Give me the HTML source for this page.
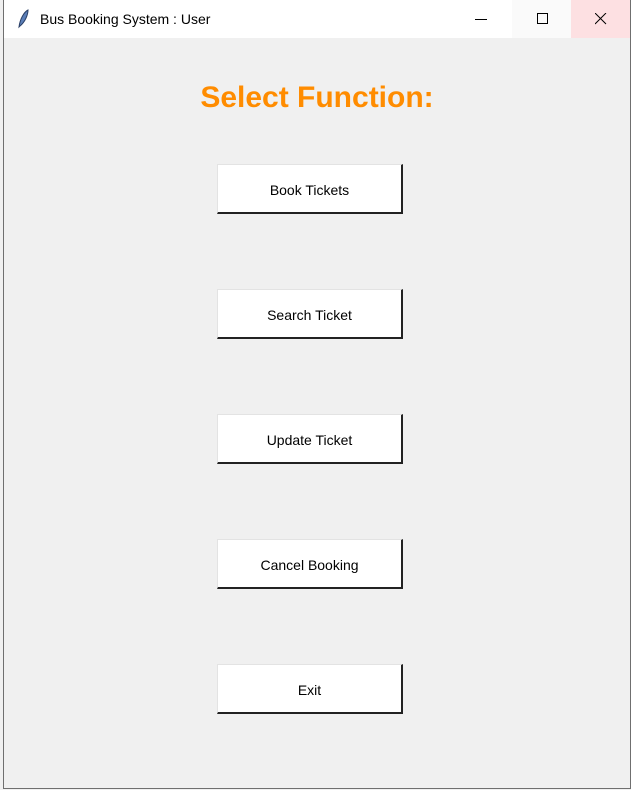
<html><head><style>
body{margin:0;width:631px;height:790px;background:#f0f0f0;font-family:"Liberation Sans",sans-serif;position:relative;overflow:hidden}
.win{position:absolute;left:3px;top:0;width:626px;height:788px;border:1px solid #6f6f6f;border-top:none;background:#f0f0f0}
.tb{position:absolute;left:0;top:0;width:626px;height:38px;background:#fff}
.t{position:absolute;left:36px;top:11px;font-size:14px;color:#000}
.mx{position:absolute;left:508px;top:0;width:59px;height:38px;background:#fafafa}
.cl{position:absolute;left:567px;top:0;width:59px;height:38px;background:#fde0e2}
h1{position:absolute;left:0;width:626px;top:81px;margin:0;text-align:center;font-size:30px;font-weight:bold;color:#ff8c00}
.b{position:absolute;left:213px;width:183px;height:47px;background:#fff;border-top:1px solid #e3e3e3;border-left:1px solid #e3e3e3;border-right:2px solid #222;border-bottom:2px solid #222;box-sizing:content-box;text-align:center;line-height:50px;font-size:14px;color:#000}
</style></head><body>
<div class="win">
<div class="tb">
<svg style="position:absolute;left:12px;top:9px" width="14" height="20" viewBox="0 0 14 20"><path d="M3 18 C4 10 8 3 12 1 C12 6 9 13 4 17 Z" fill="#5b7fb8" stroke="#2a3f66" stroke-width="1"/></svg>
<div class="t">Bus Booking System : User</div>
<svg style="position:absolute;left:471px;top:19px" width="12" height="2"><rect width="12" height="1" fill="#000"/></svg>
<div class="mx"><svg style="position:absolute;left:25px;top:13px" width="12" height="12"><rect x=".5" y=".5" width="10" height="10" fill="none" stroke="#000"/></svg></div>
<div class="cl"><svg style="position:absolute;left:24px;top:13px" width="12" height="12"><path d="M0 0L11 11M11 0L0 11" stroke="#000"/></svg></div>
</div>
<h1>Select Function:</h1>
<div class="b" style="top:164px">Book Tickets</div>
<div class="b" style="top:289px">Search Ticket</div>
<div class="b" style="top:414px">Update Ticket</div>
<div class="b" style="top:539px">Cancel Booking</div>
<div class="b" style="top:664px">Exit</div>
</div>
</body></html>
